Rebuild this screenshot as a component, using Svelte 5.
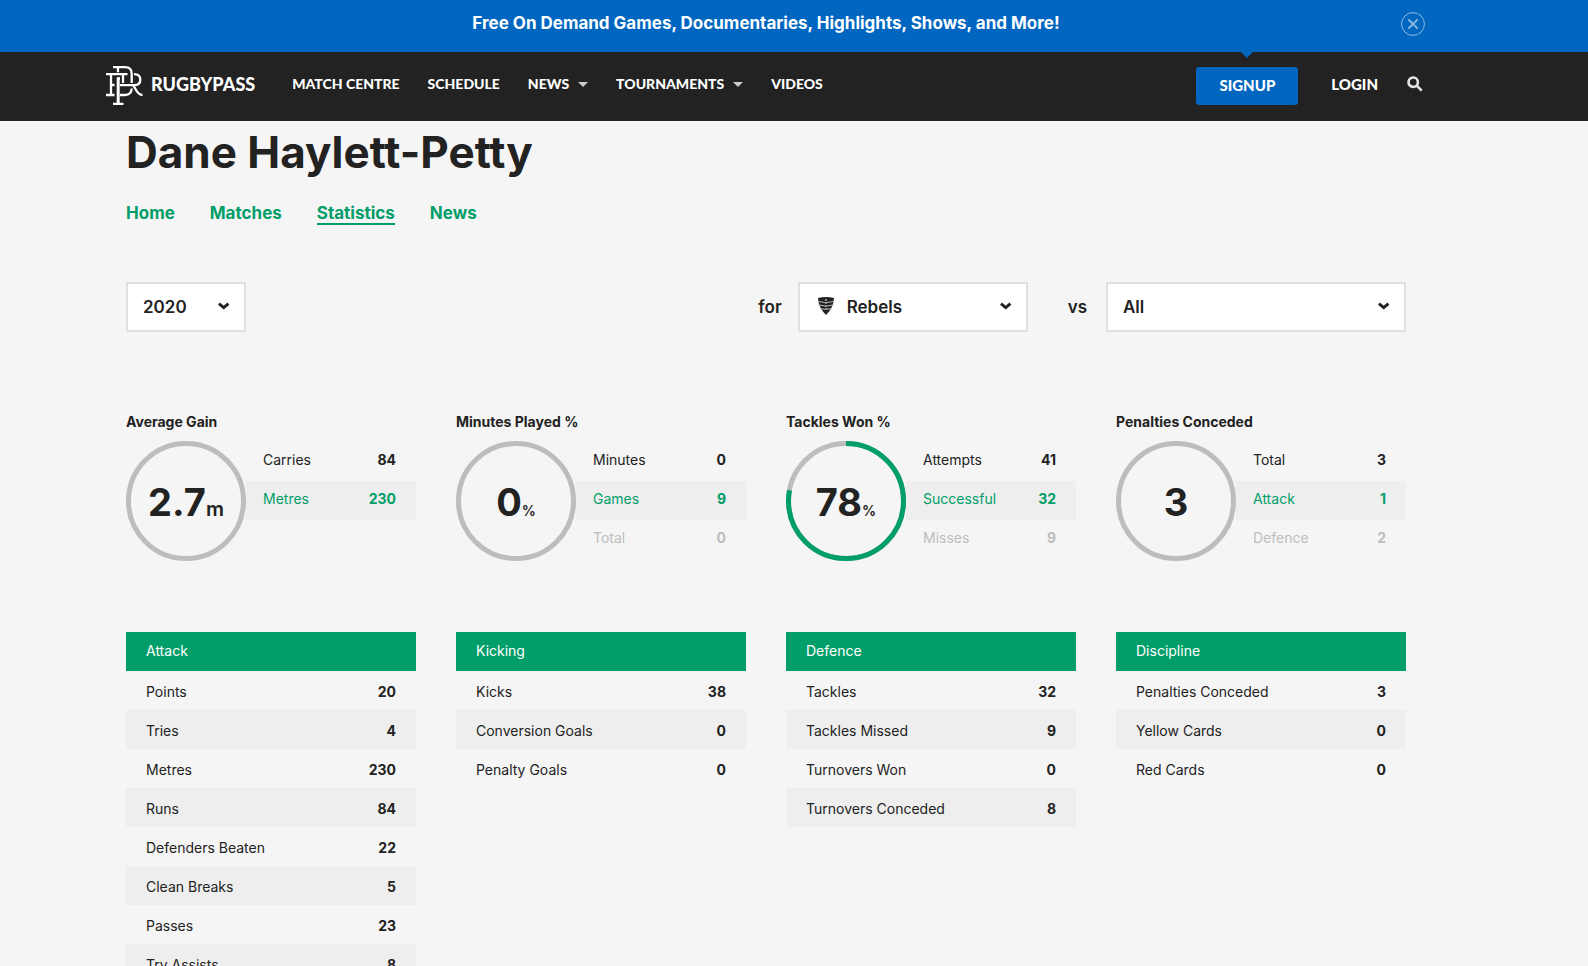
<script lang="ts">
	type Row = [label: string, value: number]

	interface Gauge {
		title: string
		value: string
		unit?: string
		percent: number
		rows: Row[]
	}

	const links = [
		{ name: 'Match Centre', menu: false },
		{ name: 'Schedule', menu: false },
		{ name: 'News', menu: true },
		{ name: 'Tournaments', menu: true },
		{ name: 'Videos', menu: false },
	]

	const tabs = ['Home', 'Matches', 'Statistics', 'News']

	const gauges: Gauge[] = [
		{
			title: 'Average Gain',
			value: '2.7',
			unit: 'm',
			percent: 0,
			rows: [['Carries', 84], ['Metres', 230]],
		},
		{
			title: 'Minutes Played %',
			value: '0',
			unit: '%',
			percent: 0,
			rows: [['Minutes', 0], ['Games', 9], ['Total', 0]],
		},
		{
			title: 'Tackles Won %',
			value: '78',
			unit: '%',
			percent: 78,
			rows: [['Attempts', 41], ['Successful', 32], ['Misses', 9]],
		},
		{
			title: 'Penalties Conceded',
			value: '3',
			percent: 0,
			rows: [['Total', 3], ['Attack', 1], ['Defence', 2]],
		},
	]

	const groups: { title: string; rows: Row[] }[] = [
		{
			title: 'Attack',
			rows: [
				['Points', 20],
				['Tries', 4],
				['Metres', 230],
				['Runs', 84],
				['Defenders Beaten', 22],
				['Clean Breaks', 5],
				['Passes', 23],
				['Try Assists', 8],
			],
		},
		{
			title: 'Kicking',
			rows: [['Kicks', 38], ['Conversion Goals', 0], ['Penalty Goals', 0]],
		},
		{
			title: 'Defence',
			rows: [
				['Tackles', 32],
				['Tackles Missed', 9],
				['Turnovers Won', 0],
				['Turnovers Conceded', 8],
			],
		},
		{
			title: 'Discipline',
			rows: [['Penalties Conceded', 3], ['Yellow Cards', 0], ['Red Cards', 0]],
		},
	]

	let tab = $state('Statistics')
	let season = $state('2020')
	let team = $state('Rebels')
	let opponent = $state('All')
	let promo = $state(true)
</script>

{#snippet chevron()}
	<svg class="chevron" viewBox="0 0 12 8" aria-hidden="true">
		<path d="M1 1.700l4.700 3.900 4.700-3.900" />
	</svg>
{/snippet}

<div class="page">
	{#if promo}
		<div class="promo">
			<div class="wrap wide">
				<a class="promo_text" href="#free">
					Free On Demand Games, Documentaries, Highlights, Shows, and More!
				</a>
				<button class="close" aria-label="Close" onclick={() => (promo = false)}>
					<svg viewBox="0 0 24 24">
						<circle cx="12" cy="12" r="11.4" />
						<path d="M7.3 7.3l9.4 9.4M16.7 7.3l-9.4 9.4" stroke-width="1.8" />
					</svg>
				</button>
			</div>
		</div>
	{/if}

	<header>
		<div class="wrap wide bar">
			<a class="logo" href="#home">
				<svg viewBox="0 0 37 40" aria-hidden="true">
					<path d="M7 1.200h12c4.500 0 6.700 2.500 6.700 6.500v9.300" />
					<path d="M12 1.200v5M0 8.200h21.500M5 8.200v20.800M0 29h8.500M5 19h3.500" />
					<path d="M12.200 11.500v26.500" stroke-width="3" />
					<path d="M7 37.800h10.500M17 8.200v8.800M11 12.500h3" />
					<path d="M14 19.200h14c4 0 6.300-2 6.300-5.400s-2.300-5.600-6.300-5.600" />
					<path d="M27 19.200c3 3 3.500 9.800 9.500 9.800" />
					<path d="M14 29h5c4 0 6.500-2.500 6.700-6.500" />
				</svg>
				<span>RUGBYPASS</span>
			</a>
			<nav class="links">
				{#each links as link}
					<a href="#{link.name}" class:menu={link.menu}>{link.name}</a>
				{/each}
			</nav>
			<a class="signup" href="#signup">Signup</a>
			<a class="login" href="#login">Login</a>
			<button class="search" aria-label="Search">
				<svg viewBox="0 0 16 16">
					<circle cx="6.200" cy="6.200" r="4.700" />
					<path d="M9.700 9.700l5 5" />
				</svg>
			</button>
		</div>
	</header>

	<main class="wrap">
		<h1>Dane Haylett-Petty</h1>

		<nav class="tabs">
			{#each tabs as name}
				<a href="#{name}" class:active={tab === name} onclick={() => (tab = name)}>{name}</a>
			{/each}
		</nav>

		<form class="filters">
			<div class="select season">
				<select bind:value={season} aria-label="Season">
					<option>2020</option>
				</select>
				{@render chevron()}
			</div>
			<label for="team">for</label>
			<div class="select team">
				<svg class="crest" viewBox="0 0 18 20" aria-hidden="true">
					<path d="M1 2Q9 0 17 2Q16.500 12 9 19Q1.500 12 1 2z" fill="#222" />
					<path
						d="M1 5.500l7 1M17 5.500l-7 1M1.500 9l6.500 1M16.500 9l-6.500 1M3 12.500l5 .8M15 12.500l-5 .8"
						stroke="#bbb"
					/>
					<path d="M9 3v12" stroke="#ddd" stroke-width="1.200" stroke-dasharray="2 1" />
				</svg>
				<select id="team" bind:value={team}>
					<option>Rebels</option>
				</select>
				{@render chevron()}
			</div>
			<label class="versus" for="opponent">vs</label>
			<div class="select opponent">
				<select id="opponent" bind:value={opponent}>
					<option>All</option>
				</select>
				{@render chevron()}
			</div>
		</form>

		<div class="grid gauges">
			{#each gauges as gauge}
				<section>
					<h2>{gauge.title}</h2>
					<div class="gauge">
						<div class="dial">
							<svg viewBox="0 0 120 120" aria-hidden="true">
								<circle cx="60" cy="60" r="57.500" />
								{#if gauge.percent}
									<circle
										class="fill"
										cx="60"
										cy="60"
										r="57.500"
										pathLength="100"
										stroke-dasharray="{gauge.percent} 100"
									/>
								{/if}
							</svg>
							<p>
								{gauge.value}{#if gauge.unit}<span class:small={gauge.unit === '%'}
										>{gauge.unit}</span
									>{/if}
							</p>
						</div>
						<table>
							<tbody>
								{#each gauge.rows as [label, value]}
									<tr>
										<th scope="row">{label}</th>
										<td>{value}</td>
									</tr>
								{/each}
							</tbody>
						</table>
					</div>
				</section>
			{/each}
		</div>

		<div class="grid groups">
			{#each groups as group}
				<table>
					<thead>
						<tr>
							<th colspan="2">{group.title}</th>
						</tr>
					</thead>
					<tbody>
						{#each group.rows as [label, value]}
							<tr>
								<th scope="row">{label}</th>
								<td>{value}</td>
							</tr>
						{/each}
					</tbody>
				</table>
			{/each}
		</div>
	</main>
</div>

<style>
	:global(html) {
		scrollbar-width: none;
	}
	:global(body) {
		background: #f5f5f5;
	}

	.page {
		--green: #029e69;
		--blue: #0066bf;
		--dark: #222;
		color: var(--dark);
		font-family: Inter, 'Liberation Sans', sans-serif;
		font-size: 14px;
	}
	a {
		color: inherit;
		text-decoration: none;
	}
	button {
		padding: 0;
		border: 0;
		background: none;
		cursor: pointer;
	}
	svg {
		display: block;
		fill: none;
	}

	.wrap {
		box-sizing: border-box;
		max-width: 1280px;
		margin: 0 max(20px, calc(50% - 612px)) 0 max(20px, calc(50% - 668px));
	}
	.wrap.wide {
		max-width: 1320px;
		margin: 0 max(0px, calc(50% - 632px)) 0 max(0px, calc(50% - 688px));
	}

	.promo {
		background: var(--blue);
		color: #fff;
	}
	.promo .wrap {
		position: relative;
		height: 52px;
		text-align: center;
	}
	.promo_text {
		font-size: 17px;
		font-weight: 700;
		line-height: 46px;
	}
	.close {
		position: absolute;
		top: 12px;
		right: 1px;
	}
	.close svg {
		width: 24px;
		height: 24px;
		stroke: #8dbbe3;
		stroke-width: 1;
	}

	header {
		background: var(--dark);
		color: #fff;
		font-family: Lato, sans-serif;
		font-size: 14px;
		font-weight: 900;
		text-transform: uppercase;
	}
	.bar {
		display: flex;
		align-items: center;
		height: 69px;
		padding-bottom: 6px;
	}
	.logo {
		display: flex;
		align-items: center;
		gap: 8px;
		margin-right: 37px;
		font-size: 18px;
	}
	.logo svg {
		width: 37px;
		height: 40px;
		margin-top: 4px;
		stroke: #fff;
		stroke-width: 2.3;
	}
	.links {
		display: flex;
		gap: 28px;
		margin-right: auto;
	}
	.menu::after {
		content: '';
		display: inline-block;
		margin-left: 9px;
		border: 5px solid transparent;
		border-top-color: #ccc;
		border-bottom: 0;
		vertical-align: 2px;
	}
	.signup,
	.login {
		font-size: 15px;
	}
	.signup {
		position: relative;
		margin: 4px 33px 0 0;
		padding: 0 23px 2px;
		border-radius: 3px;
		background: var(--blue);
		line-height: 36px;
	}
	.signup::before {
		content: '';
		position: absolute;
		top: -15px;
		left: calc(50% - 6px);
		border: 6px solid transparent;
		border-top-color: var(--blue);
		border-bottom: 0;
	}
	.login {
		margin-right: 29px;
	}
	.search {
		margin-right: 3px;
	}
	.search svg {
		width: 16px;
		height: 16px;
		stroke: #e6e6e6;
		stroke-width: 2.6;
	}

	h1 {
		margin: 0;
		font-size: 44px;
		font-weight: 700;
		line-height: 62px;
	}

	.tabs {
		display: flex;
		gap: 35px;
		margin-top: 20px;
		color: var(--green);
		font-size: 17px;
		font-weight: 700;
		line-height: 20px;
	}
	.tabs .active {
		border-bottom: 2px solid;
	}

	.filters {
		display: flex;
		align-items: center;
		margin-top: 57px;
		font-size: 17px;
		font-weight: 600;
	}
	.filters label {
		margin-right: 16px;
	}
	.filters .versus {
		margin: 0 19px 0 40px;
	}
	.select {
		position: relative;
	}
	.season {
		width: 120px;
		margin-right: auto;
	}
	.team {
		width: 230px;
	}
	.opponent {
		width: 300px;
	}
	select {
		box-sizing: border-box;
		width: 100%;
		height: 50px;
		padding: 0 15px;
		border: 2px solid #e0e0e0;
		border-radius: 0;
		background: #fff;
		color: inherit;
		font: inherit;
		appearance: none;
	}
	.team select {
		padding-left: 47px;
	}
	.crest {
		position: absolute;
		top: 14px;
		left: 19px;
		width: 18px;
		height: 20px;
		pointer-events: none;
	}
	.chevron {
		position: absolute;
		top: 20px;
		right: 16px;
		width: 12px;
		height: 8px;
		stroke: var(--dark);
		stroke-width: 3;
		pointer-events: none;
	}

	.grid {
		display: grid;
		grid-template-columns: repeat(4, minmax(0, 1fr));
		align-items: start;
		gap: 40px;
	}
	.gauges {
		margin-top: 80px;
	}
	.groups {
		margin-top: 71px;
	}

	h2 {
		margin: 0 0 9px;
		font-size: 14px;
		font-weight: 700;
		line-height: 20px;
	}
	.gauge {
		display: flex;
		align-items: flex-start;
	}
	.dial {
		position: relative;
		flex: none;
		width: 120px;
		height: 120px;
	}
	.dial circle {
		stroke: #bdbdbd;
		stroke-width: 5;
	}
	.dial .fill {
		stroke: var(--green);
		transform: rotate(-90deg);
		transform-origin: center;
	}
	.dial p {
		position: absolute;
		inset: 0;
		margin: 0;
		font-size: 38px;
		font-weight: 700;
		line-height: 122px;
		text-align: center;
	}
	.dial span {
		font-size: 20px;
		font-weight: 600;
	}
	.dial .small {
		font-size: 14px;
	}

	table {
		width: 100%;
		border-collapse: collapse;
	}
	tr {
		height: 39px;
	}
	th,
	td {
		padding: 2px 20px 0;
		font-weight: 400;
		text-align: left;
	}
	td {
		font-weight: 700;
		text-align: right;
	}
	tbody tr:nth-child(2n) {
		background: #eee;
	}
	thead {
		background: var(--green);
		color: #fff;
	}
	thead th {
		padding: 0 20px 2px;
	}

	.gauge table {
		margin-top: 1px;
	}
	.gauge th,
	.gauge td {
		padding: 0 20px 4px 17px;
	}
	.gauge tr:nth-child(2) {
		color: var(--green);
	}
	.gauge tr:nth-child(3) {
		color: #bdbdbd;
	}
</style>
